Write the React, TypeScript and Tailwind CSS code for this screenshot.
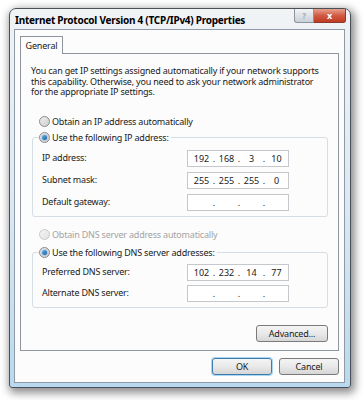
import React from "react";

function Radio({ checked = false, disabled = false }: { checked?: boolean; disabled?: boolean }) {
  return (
    <span
      className={
        "flex h-[11px] w-[11px] shrink-0 items-center justify-center rounded-full border " +
        (disabled
          ? "border-[#c8c8c8] bg-gradient-to-br from-[#f4f4f4] to-[#e2e2e2]"
          : "border-[#8a8a8a] bg-gradient-to-br from-[#eeeeee] to-[#cfcfcf]")
      }
    >
      {checked && (
        <span className="h-[5px] w-[5px] rounded-full bg-gradient-to-br from-[#5fb4ec] to-[#1a5f9e] shadow-[0_0_2px_#3b8fd4]" />
      )}
    </span>
  );
}

function IpField({ parts }: { parts: string[] }) {
  return (
    <div className="flex h-[17px] w-[102px] items-center border border-[#c4c8cd] bg-white pl-[2px] tracking-normal text-[#1a1a1a]">
      {parts.map((p, i) => (
        <React.Fragment key={i}>
          <span className="w-[23px] text-center leading-none">{p}</span>
          {i < 3 && <span className="flex w-[2px] justify-center leading-none">.</span>}
        </React.Fragment>
      ))}
    </div>
  );
}

function Row({ label, parts }: { label: string; parts: string[] }) {
  return (
    <div className="flex items-center">
      <span className="w-[154px] pl-[9px]">{label}</span>
      <IpField parts={parts} />
    </div>
  );
}

function Btn({ children, w, focus = false }: { children: React.ReactNode; w: string; focus?: boolean }) {
  return (
    <button
      className={
        "flex h-[17px] items-center justify-center rounded-[3px] border bg-gradient-to-b from-[#f4f4f4] via-[#e9e9e9] to-[#d6d6d6] text-[#1a1a1a] leading-none " +
        w +
        (focus ? " border-[#3d7bad] shadow-[0_0_0_1px_#a9d6f3]" : " border-[#7a7a7a]")
      }
    >
      {children}
    </button>
  );
}

export default function App() {
  const empty = ["", "", "", ""];
  return (
    <div className="h-[400px] w-[364px] overflow-hidden bg-white pl-[9px] pt-[8px] font-['Noto_Sans','Liberation_Sans',sans-serif] text-[9px] tracking-[-0.2px] text-[#1a1a1a]">
      {/* window */}
      <div className="flex h-[380px] w-[342px] flex-col rounded-t-[7px] rounded-b-[3px] border border-[#4a5058] bg-gradient-to-b from-[#f1f3f5] via-[#dce9f3] to-[#b9d9ee] shadow-[2px_3px_8px_2px_rgba(0,0,0,0.45)]">
        {/* title bar */}
        <div className="flex h-[20px] items-start justify-between pl-[5px] pr-[4px]">
          <span className="mt-[6px] text-[10px] font-bold leading-none tracking-[-0.25px] text-black">
            Internet Protocol Version 4 (TCP/IPv4) Properties
          </span>
          <div className="flex">
            <div className="flex h-[14px] w-[20px] items-center justify-center rounded-bl-[3px] border border-t-0 border-[#8c959e] bg-gradient-to-b from-[#f2f4f6] to-[#c8d0d8] text-[8px] font-bold leading-none text-[#a2aab2]">
              ?
            </div>
            <div className="flex h-[14px] w-[32px] items-center justify-center rounded-br-[3px] border border-l-0 border-t-0 border-[#8a3a2c] bg-gradient-to-b from-[#e8a08f] via-[#d05a44] to-[#c23a22] text-[9px] font-bold leading-none text-white">
              x
            </div>
          </div>
        </div>
        {/* client area */}
        <div className="ml-[4px] flex h-[354px] w-[331px] flex-col border border-[#8e9aa6] bg-[#fcfcfc] px-[5px] pt-[6px]">
          {/* tab header */}
          <div className="relative z-10 -mb-px flex h-[18px] w-[43px] items-center justify-center border border-b-0 border-[#8f959c] bg-[#fcfcfc]">
            General
          </div>
          {/* tab page */}
          <div className="flex h-[298px] w-[319px] flex-col border border-[#8f959c] pl-[11px] pt-[12px]">
            <p className="-ml-px w-[296px] leading-[10.5px]">
              You can get IP settings assigned automatically if your network supports this
              capability. Otherwise, you need to ask your network administrator for the
              appropriate IP settings.
            </p>
            <label className="ml-[7px] mt-[18px] flex h-[12px] items-center gap-[2px]">
              <Radio />
              <span>Obtain an IP address automatically</span>
            </label>
            <fieldset className="mt-[4px] w-[296px] rounded-[3px] border border-[#d6dde3] pb-[5px] pl-[6px]">
              <legend className="flex h-[12px] items-center gap-[2px] pr-[2px]">
                <Radio checked />
                <span>Use the following IP address:</span>
              </legend>
              <div className="-ml-[6px] mt-[6px] flex flex-col gap-[5px]">
                <Row label="IP address:" parts={["192", "168", "3", "10"]} />
                <Row label="Subnet mask:" parts={["255", "255", "255", "0"]} />
                <Row label="Default gateway:" parts={empty} />
              </div>
            </fieldset>
            <label className="ml-[7px] mt-[12px] flex h-[12px] items-center gap-[2px] text-[#a3a3a3]">
              <Radio disabled />
              <span>Obtain DNS server address automatically</span>
            </label>
            <fieldset className="mt-[6px] w-[296px] rounded-[3px] border border-[#d6dde3] pb-[5px] pl-[6px]">
              <legend className="flex h-[12px] items-center gap-[2px] pr-[2px]">
                <Radio checked />
                <span>Use the following DNS server addresses:</span>
              </legend>
              <div className="-ml-[6px] mt-[5px] flex flex-col gap-[4px]">
                <Row label="Preferred DNS server:" parts={["102", "232", "14", "77"]} />
                <Row label="Alternate DNS server:" parts={empty} />
              </div>
            </fieldset>
            <div className="mt-[17px] flex w-[296px] justify-end">
              <Btn w="w-[72px]">Advanced...</Btn>
            </div>
          </div>
          {/* dialog buttons */}
          <div className="mt-[7px] flex justify-end gap-[7px]">
            <Btn w="w-[60px]" focus>
              OK
            </Btn>
            <Btn w="w-[60px]">Cancel</Btn>
          </div>
        </div>
      </div>
    </div>
  );
}
